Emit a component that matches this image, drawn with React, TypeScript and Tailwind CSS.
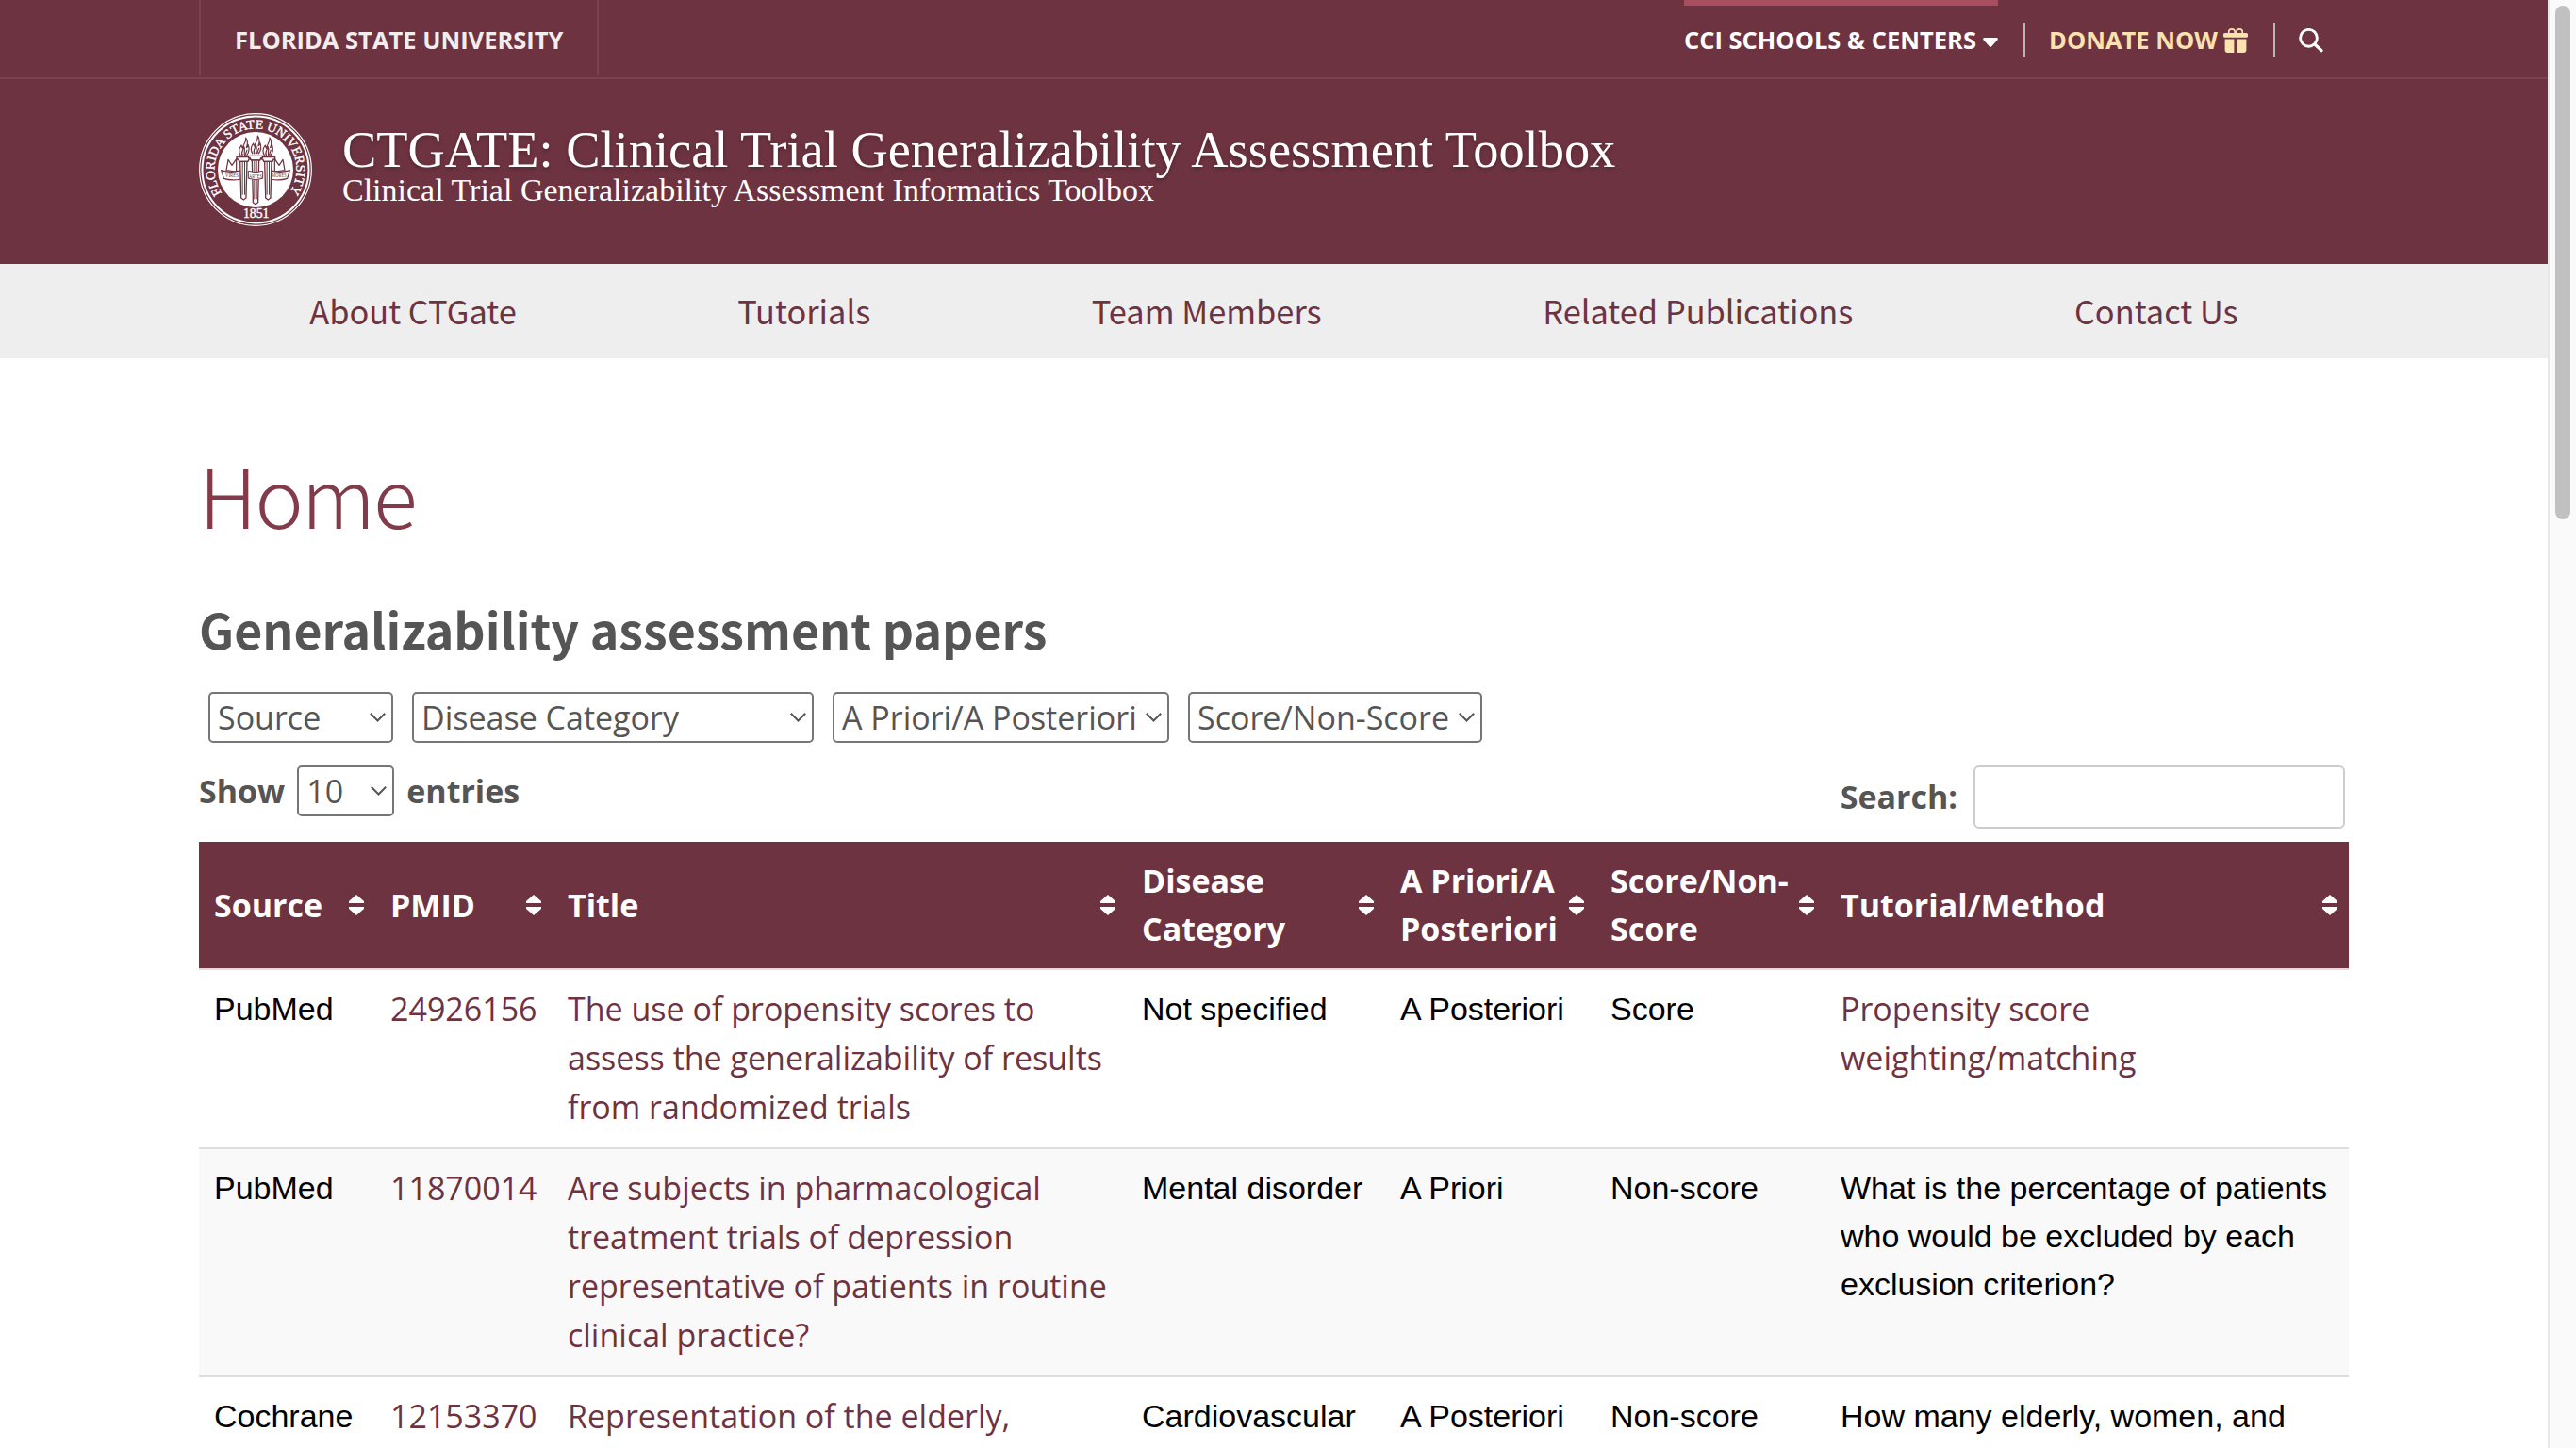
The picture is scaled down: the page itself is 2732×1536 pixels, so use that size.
import React from "react";
import { BsGiftFill } from "react-icons/bs";

const MAROON = "#6e3341";

function Torch({ x, top, bottom }: { x: number; top: number; bottom: number }) {
  return (
    <g stroke={MAROON} strokeWidth="4" fill="#fff">
      <path d={`M${x - 22} ${top}h44v7h-5l-3 7h-28l-3-7h-5z`} />
      <path d={`M${x - 11} ${top + 14}h22L${x + 8} ${bottom - 14}v10l-8 6l-8-6v-10z`} />
      <path d={`M${x - 3.5} ${top + 16}V${bottom - 14}M${x + 3.5} ${top + 16}V${bottom - 14}`} strokeWidth="3" />
    </g>
  );
}

function Flame({ x, y }: { x: number; y: number }) {
  return (
    <g transform={`translate(${x} ${y})`} fill="none" stroke={MAROON} strokeWidth="3.6" strokeLinejoin="round">
      <path d="M-10 60C-20 44-14 34-8 26C-7 32-6 34-4 36C-3 22 8 18 6 2C14 14 12 24 8 34C12 32 13 28 13 24C19 38 16 50 8 60" />
      <path d="M-4 60C-12 46 0 42 0 30C6 42-2 50 3 60M6 58C4 50 10 46 10 40" />
    </g>
  );
}

function Seal() {
  return (
    <svg className="block size-[120px] shrink-0" viewBox="33 30 360 360" role="img">
      <circle cx="213" cy="210" r="178" fill="none" stroke="#fff" strokeWidth="3.5" />
      <circle cx="213" cy="210" r="169.500" fill="none" stroke="#fff" strokeWidth="6" />
      <circle cx="213" cy="210" r="120" fill="#fff" />
      <defs>
        <path id="seal-top" d="M106.200 284.800A130.400 130.400 0 1 1 319.800 284.800" />
      </defs>
      <text fill="#fff" stroke="#fff" strokeWidth="1.200" fontFamily="Liberation Serif" fontSize="41">
        <textPath href="#seal-top" textLength="566" lengthAdjust="spacingAndGlyphs">
          FLORIDA STATE UNIVERSITY
        </textPath>
      </text>
      <text x="215" y="363" fill="#fff" stroke="#fff" strokeWidth="1.200" fontFamily="Liberation Serif" fontSize="41" textAnchor="middle">
        1851
      </text>
      <Flame x={176} y={106} />
      <Flame x={214} y={100} />
      <Flame x={252} y={106} />
      <g fill="#fff" stroke={MAROON} strokeWidth="3.6" strokeLinejoin="round">
        <path d="M120 212L126 178L138 196L152 176V216z" />
        <path d="M306 212L300 178L288 196L274 176V216z" />
        <path d="M104 212Q136 222 166 212V240Q136 246 112 238z" />
        <path d="M322 212Q290 222 260 212V240Q290 246 314 238z" />
      </g>
      <Torch x={175} top={170} bottom={304} />
      <Torch x={253} top={170} bottom={304} />
      <Torch x={213} top={166} bottom={318} />
      <path d="M190 214Q213 222 236 214V238Q213 246 190 238z" fill="#fff" stroke={MAROON} strokeWidth="3" />
      <g fill={MAROON} fontFamily="Liberation Serif" fontSize="16" textAnchor="middle">
        <text x="138" y="234" textLength="42" lengthAdjust="spacingAndGlyphs">VIRES</text>
        <text x="213" y="236" textLength="42" lengthAdjust="spacingAndGlyphs">ARTES</text>
        <text x="288" y="234" textLength="46" lengthAdjust="spacingAndGlyphs">MORES</text>
      </g>
    </svg>
  );
}

function TopBar() {
  return (
    <div className="h-[84px] border-b-2 border-[#7c404e] font-['Open_Sans',sans-serif] text-[25.5px] font-bold">
      <div className="mx-auto flex h-20 w-[2280px] justify-between">
        <div className="flex items-center border-x-2 border-[#7c404e] pt-1 pr-9 pl-[36px] text-[#f2eeee]">
          <span className="w-[348px] whitespace-nowrap">FLORIDA STATE UNIVERSITY</span>
        </div>
        <div className="mr-[27px] flex">
          <div className="flex w-[333px] items-center justify-between border-t-[6px] border-[#a94e5e] pb-0.5 text-white">
            <span className="whitespace-nowrap">CCI SCHOOLS &amp; CENTERS</span>
            <svg className="mt-1.5 h-2.5 w-4" viewBox="0 0 16 10">
              <path d="M1.400 0H14.600Q16.600 .4 15.400 2.300L9.200 9.300Q8 10.500 6.800 9.300L.6 2.300Q-.6 .4 1.400 0z" fill="#fff" />
            </svg>
          </div>
          <div className="mt-6 mr-[25px] ml-[27px] h-9 w-0.5 bg-[#b9b5b5]" />
          <div className="flex w-[211px] items-center justify-between text-[#fae3af]">
            <span className="whitespace-nowrap pt-1">DONATE NOW</span>
            <BsGiftFill className="mt-1.5 size-[26px]" />
          </div>
          <div className="mt-6 mr-[25px] ml-[27px] h-9 w-0.5 bg-[#b9b5b5]" />
          <svg className="mt-[30px] size-[26px]" viewBox="0 0 26 26" fill="none" stroke="#fff" strokeLinecap="round">
            <circle cx="10.500" cy="10.300" r="8.900" strokeWidth="2.900" />
            <path d="M17 17L24 23.700" strokeWidth="3.200" />
          </svg>
        </div>
      </div>
    </div>
  );
}

function Masthead() {
  return (
    <div className="mx-auto flex h-[196px] w-[2280px] pt-9">
      <Seal />
      <div className="mt-3.5 ml-8 whitespace-nowrap font-['Liberation_Serif',serif] text-white">
        <div className="text-[54.4px] leading-[50px] [text-shadow:0_2px_4px_rgba(0,0,0,0.3)]">
          CTGATE: Clinical Trial Generalizability Assessment Toolbox
        </div>
        <div className="text-[34px] leading-[35px]">Clinical Trial Generalizability Assessment Informatics Toolbox</div>
      </div>
    </div>
  );
}

const NAV = ["About CTGate", "Tutorials", "Team Members", "Related Publications", "Contact Us"];

function Select({ label, className }: { label: string; className: string }) {
  return (
    <div
      className={`flex h-[54px] items-center justify-between rounded-[5px] border-2 border-[#767676] bg-white pr-1.5 pl-2 font-normal ${className}`}
    >
      <span className="whitespace-nowrap leading-[50px]">{label}</span>
      <svg className="h-[10px] w-[17px]" viewBox="0 0 17 10" fill="none">
        <path d="M.8 .8L8.500 8.500L16.200 .8" stroke="#555" strokeWidth="2" />
      </svg>
    </div>
  );
}

const HEADERS: [string, string][] = [
  ["Source", "w-[187px]"],
  ["PMID", "w-[188px]"],
  ["Title", "w-[609px]"],
  ["Disease Category", "w-[274px]"],
  ["A Priori/A Posteriori", "w-[223px]"],
  ["Score/Non-Score", "w-[244px]"],
  ["Tutorial/Method", "w-[555px]"],
];

type Row = {
  source: string;
  pmid: string;
  title: string;
  disease: string;
  timing: string;
  score: string;
  method: string;
  linked?: boolean;
};

const ROWS: Row[] = [
  {
    source: "PubMed",
    pmid: "24926156",
    title: "The use of propensity scores to assess the generalizability of results from randomized trials",
    disease: "Not specified",
    timing: "A Posteriori",
    score: "Score",
    method: "Propensity score weighting/matching",
    linked: true,
  },
  {
    source: "PubMed",
    pmid: "11870014",
    title: "Are subjects in pharmacological treatment trials of depression representative of patients in routine clinical practice?",
    disease: "Mental disorder",
    timing: "A Priori",
    score: "Non-score",
    method: "What is the percentage of patients who would be excluded by each exclusion criterion?",
  },
  {
    source: "Cochrane",
    pmid: "12153370",
    title: "Representation of the elderly,",
    disease: "Cardiovascular",
    timing: "A Posteriori",
    score: "Non-score",
    method: "How many elderly, women, and",
  },
];

function Link({ children }: { children: React.ReactNode }) {
  return <a className="font-['Open_Sans',sans-serif] text-[#6e3341]">{children}</a>;
}

function SortIcon() {
  return (
    <svg className="h-[22px] w-4 shrink-0" viewBox="0 0 16 22" fill="#fff">
      <path d="M8 0L16 7V9H0V7z" />
      <path d="M8 22L16 15V13H0V15z" />
    </svg>
  );
}

function PapersTable() {
  return (
    <table className="w-[2280px] table-fixed border-collapse text-[34px] leading-[51px]">
      <thead>
        <tr className="bg-[#6e3341] text-left font-['Open_Sans',sans-serif] text-white">
          {HEADERS.map(([label, width]) => (
            <th key={label} className={`h-[135px] p-0 font-bold ${width}`}>
              <div className="flex items-center justify-between pr-3 pl-4">
                <span>{label}</span>
                <SortIcon />
              </div>
            </th>
          ))}
        </tr>
      </thead>
      <tbody className="font-['Liberation_Sans',sans-serif] text-black">
        {ROWS.map((r) => (
          <tr key={r.pmid} className="border-t-2 border-[#ddd] align-top even:bg-[#f9f9f9]">
            <td className="py-4 pl-4">{r.source}</td>
            <td className="py-4 pl-4">
              <Link>{r.pmid}</Link>
            </td>
            <td className="px-4 py-4">
              <Link>{r.title}</Link>
            </td>
            <td className="py-4 pl-4">{r.disease}</td>
            <td className="py-4 pl-4">{r.timing}</td>
            <td className="py-4 pl-4">{r.score}</td>
            <td className="px-4 py-4">{r.linked ? <Link>{r.method}</Link> : r.method}</td>
          </tr>
        ))}
      </tbody>
    </table>
  );
}

export default function App() {
  return (
    <div className="flex h-[1536px] w-[2732px] overflow-hidden bg-white">
      <main className="h-[1536px] w-[2702px] overflow-hidden">
        <header className="h-[280px] bg-[#6e3341]">
          <TopBar />
          <Masthead />
        </header>
        <nav className="h-[100px] bg-[#eee]">
          <div className="mx-auto flex h-full w-[2280px] items-center justify-around pb-0.5 font-['Noto_Sans_CJK_JP',sans-serif] text-[34.4px] text-[#6e3341]">
            {NAV.map((n) => (
              <a key={n} className="whitespace-nowrap leading-[50px]">
                {n}
              </a>
            ))}
          </div>
        </nav>
        <section className="mx-auto w-[2280px] pt-[94px] font-['Open_Sans',sans-serif] text-[34px] text-[#555]">
          <h1 className="font-['Noto_Sans_CJK_JP',sans-serif] text-[86.5px] leading-[100px] font-light tracking-[-2px] text-[#823b4b]">
            Home
          </h1>
          <h2 className="mt-[63px] font-['Noto_Sans_CJK_JP',sans-serif] text-[51.8px] leading-[60px] font-bold">
            Generalizability assessment papers
          </h2>
          <div className="mt-[37px] ml-2.5 flex gap-5">
            <Select label="Source" className="w-[196px]" />
            <Select label="Disease Category" className="w-[426px]" />
            <Select label="A Priori/A Posteriori" className="w-[357px]" />
            <Select label="Score/Non-Score" className="w-[312px]" />
          </div>
          <div className="mt-6 mb-3.5 flex items-start justify-between font-bold">
            <div className="flex h-[54px] items-center">
              <span>Show</span>
              <Select label="10" className="mr-[13px] ml-[13px] w-[103px]" />
              <span>entries</span>
            </div>
            <div className="mr-1 flex h-[67px] items-center">
              <span>Search:</span>
              <div className="ml-[17px] h-[67px] w-[394px] rounded-md border-2 border-[#ccc] bg-white" />
            </div>
          </div>
          <PapersTable />
        </section>
      </main>
      <aside className="h-[1536px] w-[30px] border-l-2 border-[#e8e8e8] bg-[#fafafa] pt-1.5 pl-1.5">
        <div className="h-[545px] w-4 rounded-full bg-[#c1c1c1]" />
      </aside>
    </div>
  );
}
